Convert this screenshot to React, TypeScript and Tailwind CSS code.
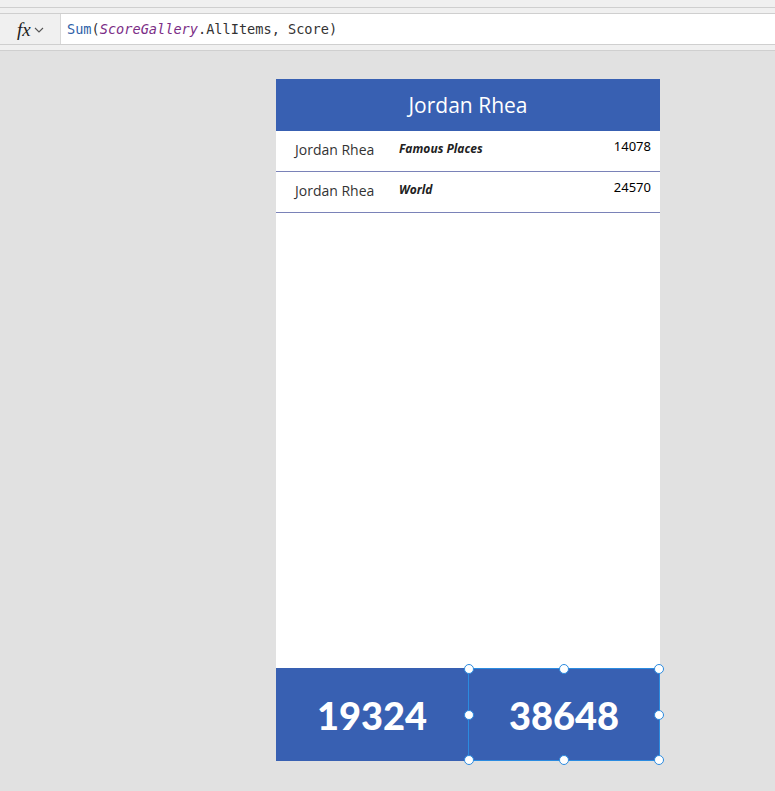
import React from "react";

const rows = [
  { name: "Jordan Rhea", level: "Famous Places", score: "14078" },
  { name: "Jordan Rhea", level: "World", score: "24570" },
];

const handles = [
  "left-0 top-0",
  "left-1/2 top-0",
  "left-full top-0",
  "left-0 top-1/2",
  "left-full top-1/2",
  "left-0 top-full",
  "left-1/2 top-full",
  "left-full top-full",
];

export default function App() {
  return (
    <div className="h-[791px] w-[775px] bg-[#e1e1e1] flex flex-col font-['Open_Sans',sans-serif] overflow-hidden">
      {/* barre de formule */}
      <div className="h-[8px] bg-[#f0f0f0] border-b border-[#cfcfcf]" />
      <div className="h-[6px] bg-[#f0f0f0] border-b border-[#cfcfcf]" />
      <div className="h-[31px] flex bg-white border-b border-[#cfcfcf]">
        <div className="w-[61px] bg-[#f0f0f0] border-r border-[#d8d8d8] flex items-center pl-[17px] gap-[3px]">
          <span className="font-['Liberation_Serif',serif] italic text-[19px] leading-none text-[#222]">fx</span>
          <svg width="10" height="6" viewBox="0 0 10 6" className="mt-[2px]">
            <path d="M1 1l4 4 4-4" fill="none" stroke="#555" strokeWidth="1.1" />
          </svg>
        </div>
        <div className="flex items-center pl-[6px] font-['DejaVu_Sans_Mono',monospace] text-[13.6px] text-[#333]">
          <span className="text-[#2e62a8]">Sum</span>
          <span>(</span>
          <span className="italic text-[#7b2d86]">ScoreGallery</span>
          <span>.AllItems, Score)</span>
        </div>
      </div>
      <div className="h-[6px] bg-[#f0f0f0] border-b border-[#cfcfcf]" />

      {/* écran */}
      <div className="ml-[276px] mt-[28px] w-[384px] flex flex-col">
        <div className="h-[52px] bg-[#3860b2] flex items-center justify-center text-white text-[21px] pt-[1px]">
          Jordan Rhea
        </div>
        <div className="bg-white h-[537px] flex flex-col">
          {rows.map((r, i) => (
            <div key={i} className="h-[41px] border-b border-[#7a82b8] flex relative">
              <span className="absolute left-[19px] top-[8px] text-[14px] text-[#333]">{r.name}</span>
              <span className="absolute left-[123px] top-[9px] text-[12px] font-bold italic text-[#222]">{r.level}</span>
              <span className="absolute right-[9px] top-[6px] text-[13px] text-black font-['Noto_Sans',sans-serif]">{r.score}</span>
            </div>
          ))}
        </div>
        <div className="h-[93px] bg-[#3860b2] flex relative">
          <div className="w-1/2 flex items-center justify-center text-white text-[38px] font-black font-['Lato',sans-serif] pt-[2px]">
            19324
          </div>
          <div className="w-1/2 flex items-center justify-center text-white text-[38px] font-black font-['Lato',sans-serif] pt-[2px] relative border border-[#2b8be0]">
            38648
            {handles.map((h) => (
              <span
                key={h}
                className={`absolute ${h} -translate-x-1/2 -translate-y-1/2 w-[10px] h-[10px] rounded-full bg-white border border-[#2b8be0]`}
              />
            ))}
          </div>
        </div>
      </div>
    </div>
  );
}
